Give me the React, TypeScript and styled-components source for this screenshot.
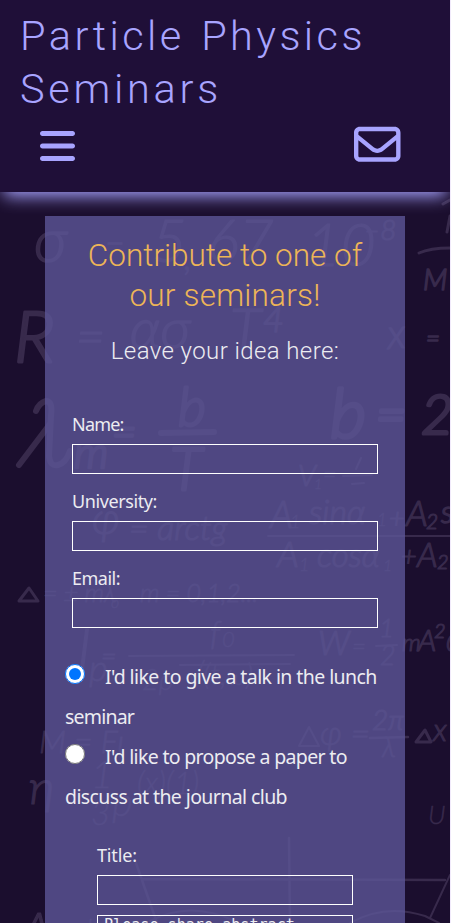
import React from 'react';
import styled, { createGlobalStyle } from 'styled-components';
import { FaBars, FaRegEnvelope } from 'react-icons/fa6';

const GlobalStyle = createGlobalStyle`
  *, *::before, *::after { box-sizing: border-box; }
  html, body { margin: 0; padding: 0; background: #f1eafb; overflow: hidden; }
`;

const Page = styled.div`
  position: relative;
  width: 450px;
  height: 923px;
  overflow: hidden;
  background: #1b0e2e;
  color: #ececf1;
  font-family: 'Noto Sans', 'Open Sans', sans-serif;
`;

const Formulas = styled.svg`
  position: absolute;
  inset: 0;
  width: 450px;
  height: 923px;
  color: #382a4c;
  font-family: Lato, 'Noto Sans', 'DejaVu Sans', sans-serif;
  font-style: italic;
  font-weight: 300;
  pointer-events: none;
`;

const Header = styled.header`
  position: relative;
  height: 192px;
  padding: 9px 20px 0;
  background: #1f0f38;
  color: #a8a4ff;
  box-shadow: 0 8px 16px -4px #a8a4ff;
`;

const SiteTitle = styled.h1`
  margin: 0;
  font: 300 41.5px/53px Roboto, sans-serif;
  word-spacing: 3px;
`;

const Line = styled.span<{ $spacing: number }>`
  display: block;
  white-space: nowrap;
  letter-spacing: ${(p) => p.$spacing}px;
`;

const Toolbar = styled.nav`
  display: flex;
  justify-content: space-between;
  align-items: flex-start;
  height: 48px;
  margin-top: 6px;
  padding: 0 29.5px 0 20px;
`;

const IconButton = styled.button<{ $size: number; $drop?: number }>`
  display: flex;
  margin: ${(p) => p.$drop ?? 0}px 0 0;
  padding: 0;
  border: 0;
  background: none;
  color: inherit;
  font-size: ${(p) => p.$size}px;
`;

const BarsIcon = styled(FaBars)`
  width: 35px;
  height: 40px;
`;

const Panel = styled.main`
  position: relative;
  width: 360px;
  height: 760px;
  margin: 24px 0 0 45px;
  padding: 20px 20px 0;
  background: rgba(93, 86, 151, 0.8);
`;

const Heading = styled.h2`
  margin: 0;
  color: #edb557;
  font: 300 31.5px/40px Roboto, sans-serif;
  text-align: center;
`;

const SubHeading = styled.h3`
  margin: 19px 0 0;
  font: 300 24px/32px Roboto, sans-serif;
  text-align: center;
`;

const Fields = styled.div<{ $inset: number; $top: number }>`
  margin: ${(p) => p.$top}px ${(p) => p.$inset}px 0;
`;

const Field = styled.label`
  display: flex;
  flex-direction: column;
  height: 77px;
  font-size: 18px;
  line-height: 40px;
`;

const LabelText = styled.span<{ $spacing: number }>`
  letter-spacing: ${(p) => p.$spacing}px;
`;

const Input = styled.input`
  width: 100%;
  height: 30px;
  padding: 0 6px;
  border: 1px solid #fff;
  border-radius: 0;
  background: transparent;
  color: inherit;
`;

const Abstract = styled.textarea`
  display: block;
  width: 100%;
  height: 120px;
  margin-top: 3px;
  padding: 0 6px;
  border: 1px solid #fff;
  border-radius: 0;
  background: transparent;
  color: inherit;
  font: 15.1px/18px 'DejaVu Sans Mono', monospace;
  resize: none;
  &::placeholder { color: #ececf1; opacity: 1; }
`;

const Choices = styled.div`
  margin-top: 22px;
`;

const Choice = styled.label`
  display: block;
  height: 80px;
  font-size: 19.5px;
  line-height: 40px;
`;

const ChoiceRow = styled.span`
  display: flex;
  height: 40px;
  white-space: nowrap;
`;

const Radio = styled.input`
  width: 20px;
  height: 20px;
  margin: 7px 20px 0 0;
`;

type Mark = [x: number, y: number, size: number, text: string, weight?: number, rotate?: number];

const marks: Mark[] = [
  [34, 262, 62, 'σ', 4], [104, 254, 38, '–', 3], [152, 262, 60, '5', 3], [184, 270, 40, ',', 2],
  [207, 262, 60, '67', 3], [306, 266, 60, '10', 3], [364, 240, 28, '–8', 3],
  [14, 362, 72, 'R', 7], [76, 354, 50, '=', 4], [130, 348, 56, 'ασ', 4],
  [230, 350, 58, 'T', 4], [263, 332, 36, '4', 4],
  [74, 468, 44, 'm', 6], [112, 446, 42, '=', 7], [178, 426, 54, 'b', 7], [170, 490, 60, 'T', 7],
  [330, 438, 70, 'b', 9], [376, 432, 52, '=', 10], [421, 434, 56, '2', 8],
  [423, 290, 29, 'M', 4], [388, 349, 42, 'x', 3, -4], [426, 347, 24, '=', 4],
  [298, 486, 30, 'V', 3], [314, 489, 14, '1', 1], [323, 483, 23, '=', 2],
  [92, 534, 43, 'φ', 3], [129, 540, 34, '= arctg', 3],
  [270, 528, 38, 'A', 3], [290, 528, 18, '1', 1], [309, 524, 34, 'sinα', 3], [377, 526, 17, '1', 1],
  [389, 528, 27, '+', 3], [406, 526, 36, 'A', 3], [426, 529, 21, '2', 3], [441, 523, 32, 's', 4],
  [277, 567, 36, 'A', 3], [299, 571, 18, '1', 1], [317, 567, 33, 'cosα', 3], [383, 571, 16, '1', 1],
  [401, 566, 27, '+', 3], [417, 567, 34, 'A', 3], [437, 569, 20, '2', 3],
  [43, 602, 25, '= ± mλ', 2], [111, 608, 16, 'o', 1], [140, 602, 25, 'm = 0,1,2...', 2],
  [78, 670, 58, 'l', 3], [101, 666, 27, '=', 2], [210, 645, 33, 'f', 2], [222, 647, 22, '0', 1],
  [318, 655, 34, 'W', 3], [352, 655, 24, '=', 2], [379, 637, 26, '1', 2], [380, 665, 27, '2', 2],
  [402, 651, 24, 'm', 3], [418, 651, 30, 'A', 3], [434, 638, 20, '2', 3], [446, 651, 30, 'ω', 3],
  [89, 681, 36, 'p', 2], [142, 690, 29, '2ρ', 1], [185, 685, 29, '√(t,ω)', 1],
  [39, 753, 32, 'M = Fι', 2], [29, 804, 48, 'η', 3], [91, 788, 38, '1', 1], [91, 825, 33, '3', 1],
  [112, 816, 40, 'p', 1], [137, 794, 31, '(x)(1)', 1],
  [320, 745, 34, 'φ =', 2], [372, 730, 28, '2π', 3], [382, 757, 28, 'λ', 2],
  [433, 741, 32, 'x', 3], [428, 824, 26, 'U', 1],
  [20, 951, 54, 'A', 3], [62, 940, 30, 'μ l', 1],
];

const strokes: [d: string, width: number][] = [
  ['M36 411 Q39 403 46 401 Q53 401 51 416 L49 456 Q50 467 58 465 Q66 463 70 451', 6],
  ['M50 424 L19 465', 6],
  ['M161 433 L214 432', 6],
  ['M343 476 L372 475 M352 484 L364 483 M356 469 L361 458', 2],
  ['M268 536 L450 536', 2],
  ['M419 253 Q430 248 450 248 M443 204 L450 200 M447 232 L450 216', 3],
  ['M19 601 L29 588 L38 601 Z', 3],
  ['M129 656 L294 655', 2],
  ['M180 665 L290 664', 2],
  ['M376 646 L397 645', 2],
  ['M299 746 L309 727 L319 746 Z', 2],
  ['M370 738 L408 737', 2.5],
  ['M416 742 L425 730 L431 742 Z', 3],
  ['M136 863 L157 923 M142 879 L445 880 M289 838 L290 923', 2.5],
  ['M150 921 Q190 900 235 921 M350 923 Q385 903 425 916 L439 923 M430 918 L450 875', 2],
];

export default function App() {
  return (
    <>
      <GlobalStyle />
      <Page>
        <Formulas viewBox="0 0 450 923" aria-hidden="true">
          <g fill="currentColor" stroke="currentColor" strokeLinejoin="round">
            {marks.map(([x, y, size, text, weight = 1, rotate = 0], i) => (
              <text key={i} x={x} y={y} fontSize={size} strokeWidth={weight * 0.4} transform={`rotate(${rotate} ${x} ${y})`}>
                {text}
              </text>
            ))}
          </g>
          <g fill="none" stroke="currentColor" strokeLinecap="round" strokeLinejoin="round">
            {strokes.map(([d, width], i) => (
              <path key={i} d={d} strokeWidth={width} />
            ))}
          </g>
        </Formulas>
        <Header>
          <SiteTitle>
            <Line $spacing={3.4}>Particle Physics</Line>
            <Line $spacing={3.7}>Seminars</Line>
          </SiteTitle>
          <Toolbar>
            <IconButton $size={40} $drop={5} aria-label="Menu"><BarsIcon /></IconButton>
            <IconButton $size={46.5} aria-label="Contact"><FaRegEnvelope /></IconButton>
          </Toolbar>
        </Header>
        <Panel>
          <Heading>
            <Line $spacing={0}>Contribute to one of</Line>
            <Line $spacing={0.2}>our seminars!</Line>
          </Heading>
          <SubHeading>
            <Line $spacing={0.4}>Leave your idea here:</Line>
          </SubHeading>
          <Fields $inset={7} $top={37}>
            <Field><LabelText $spacing={-0.8}>Name:</LabelText><Input /></Field>
            <Field><LabelText $spacing={-0.4}>University:</LabelText><Input /></Field>
            <Field><LabelText $spacing={-0.5}>Email:</LabelText><Input /></Field>
          </Fields>
          <Choices>
            <Choice>
              <ChoiceRow><Radio type="radio" name="kind" defaultChecked /><Line $spacing={-0.58}>I'd like to give a talk in the lunch</Line></ChoiceRow>
              <Line $spacing={-0.8}>seminar</Line>
            </Choice>
            <Choice>
              <ChoiceRow><Radio type="radio" name="kind" /><Line $spacing={-0.67}>I'd like to propose a paper to</Line></ChoiceRow>
              <Line $spacing={-0.6}>discuss at the journal club</Line>
            </Choice>
          </Choices>
          <Fields $inset={32} $top={18}>
            <Field><LabelText $spacing={-0.15}>Title:</LabelText><Input /></Field>
            <Abstract placeholder="Please share abstract" />
          </Fields>
        </Panel>
      </Page>
    </>
  );
}
